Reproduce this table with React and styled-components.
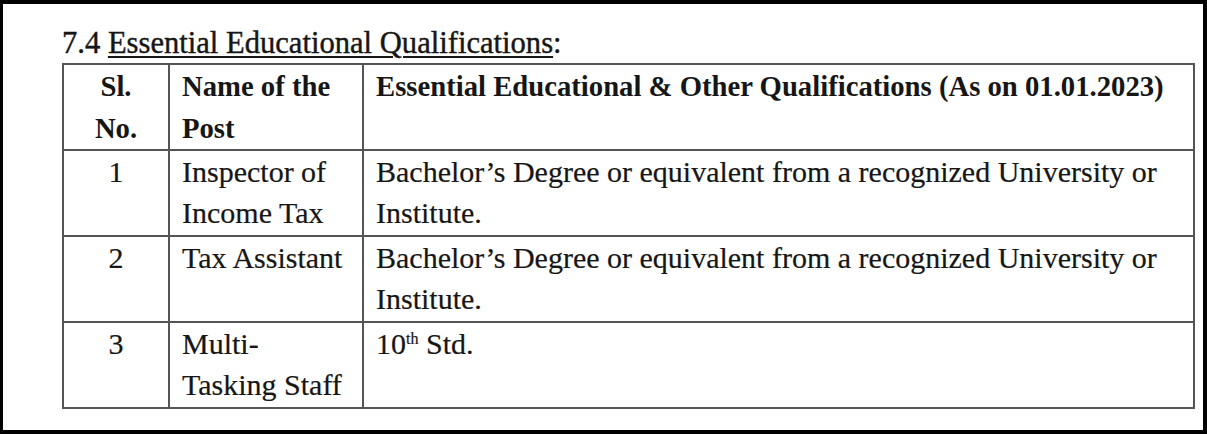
import React from "react";
import styled, { createGlobalStyle } from "styled-components";

const GlobalStyle = createGlobalStyle`
  html, body {
    margin: 0;
    padding: 0;
    background: #000;
  }
`;

const Frame = styled.div`
  width: 1207px;
  height: 434px;
  box-sizing: border-box;
  border-style: solid;
  border-color: #000;
  border-width: 4px 4px 4px 3px;
  background: #fff;
  overflow: hidden;
`;

const Sheet = styled.div`
  padding: 21px 0 0 59px;
  font-family: "Liberation Serif", "Times New Roman", serif;
  color: #161616;
`;

const Title = styled.div`
  font-size: 30.6px;
  line-height: 36px;
  height: 38px;
  -webkit-text-stroke: 0.4px #161616;

  u {
    text-decoration-thickness: 1.5px;
    text-underline-offset: 3px;
  }
`;

const Table = styled.table`
  border-collapse: collapse;
  width: 1133px;
  table-layout: fixed;
  font-size: 30px;
  line-height: 42px;

  td,
  th {
    border: 2px solid #555;
  }
`;

const HeadCell = styled.th`
  font-weight: bold;
  font-size: 28.7px;
  text-align: ${(p) => (p.$center ? "center" : "left")};
  vertical-align: top;
  padding: 0 12px;
  height: 84px;
  white-space: nowrap;
`;

const Cell = styled.td`
  text-align: ${(p) => (p.$center ? "center" : "left")};
  vertical-align: top;
  padding: 0 12px 2px;
  height: 82px;
  line-height: 41px;
  -webkit-text-stroke: 0.2px #161616;
`;

const Sup = styled.sup`
  font-size: 16px;
  line-height: 0;
  vertical-align: 10px;
`;

const rows = [
  {
    no: "1",
    post: ["Inspector of", "Income Tax"],
    qual: "Bachelor’s Degree or equivalent from a recognized University or Institute.",
  },
  {
    no: "2",
    post: ["Tax Assistant"],
    qual: "Bachelor’s Degree or equivalent from a recognized University or Institute.",
  },
  {
    no: "3",
    post: ["Multi-", "Tasking Staff"],
    qual: (
      <>
        10<Sup>th</Sup> Std.
      </>
    ),
  },
];

const App = () => {
  return (
    <Frame>
      <GlobalStyle />
      <Sheet>
        <Title>
          7.4 <u>Essential Educational Qualifications</u>:
        </Title>
        <Table>
          <colgroup>
            <col style={{ width: 106 }} />
            <col style={{ width: 194 }} />
            <col />
          </colgroup>
          <thead>
            <tr>
              <HeadCell $center>
                Sl.
                <br />
                No.
              </HeadCell>
              <HeadCell>
                Name of the
                <br />
                Post
              </HeadCell>
              <HeadCell>
                Essential Educational &amp; Other Qualifications (As on 01.01.2023)
              </HeadCell>
            </tr>
          </thead>
          <tbody>
            {rows.map((r) => (
              <tr key={r.no}>
                <Cell $center>{r.no}</Cell>
                <Cell>
                  {r.post.map((p, i) => (
                    <div key={i}>{p}</div>
                  ))}
                </Cell>
                <Cell>{r.qual}</Cell>
              </tr>
            ))}
          </tbody>
        </Table>
      </Sheet>
    </Frame>
  );
};

export default App;
